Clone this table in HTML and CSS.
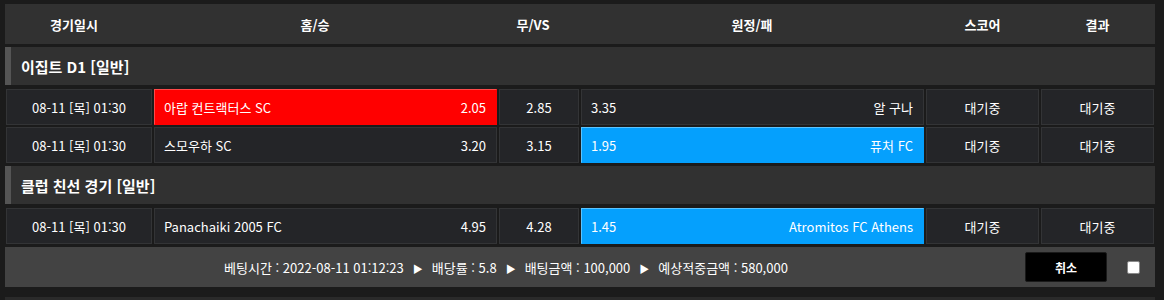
FILE: index.html
```html
<!DOCTYPE html>
<html lang="ko">
<head>
<meta charset="utf-8">
<link rel="stylesheet" href="styles.css">
</head>
<body>
<div class="wrap">
  <div class="thead">
    <div class="th c-date">경기일시</div>
    <div class="th c-home">홈/승</div>
    <div class="th c-draw">무/VS</div>
    <div class="th c-away">원정/패</div>
    <div class="th c-score">스코어</div>
    <div class="th c-result">결과</div>
  </div>

  <div class="league">이집트 D1 [일반]</div>
  <div class="rows">
    <div class="row">
      <div class="cell date">08-11 [목] 01:30</div>
      <div class="cell team home sel-red"><span>아랍 컨트랙터스 SC</span><span>2.05</span></div>
      <div class="cell draw">2.85</div>
      <div class="cell team away"><span>3.35</span><span>알 구나</span></div>
      <div class="cell score">대기중</div>
      <div class="cell result">대기중</div>
    </div>
    <div class="row">
      <div class="cell date">08-11 [목] 01:30</div>
      <div class="cell team home"><span>스모우하 SC</span><span>3.20</span></div>
      <div class="cell draw">3.15</div>
      <div class="cell team away sel-blue"><span>1.95</span><span>퓨처 FC</span></div>
      <div class="cell score">대기중</div>
      <div class="cell result">대기중</div>
    </div>
  </div>

  <div class="league">클럽 친선 경기 [일반]</div>
  <div class="rows">
    <div class="row">
      <div class="cell date">08-11 [목] 01:30</div>
      <div class="cell team home"><span>Panachaiki 2005 FC</span><span>4.95</span></div>
      <div class="cell draw">4.28</div>
      <div class="cell team away sel-blue"><span>1.45</span><span>Atromitos FC Athens</span></div>
      <div class="cell score">대기중</div>
      <div class="cell result">대기중</div>
    </div>
  </div>

  <div class="footer">
    <div class="summary">
      <span>베팅시간 : 2022-08-11 01:12:23</span><span class="tri">▶</span><span>배당률 : 5.8</span><span class="tri">▶</span><span>배팅금액 : 100,000</span><span class="tri">▶</span><span>예상적중금액 : 580,000</span>
    </div>
    <button class="cancel">취소</button>
    <span class="check"></span>
  </div>
  <div class="next"></div>
</div>
</body>
</html>
```

FILE: styles.css
```css
* { box-sizing: border-box; }
html, body { margin: 0; padding: 0; }
body {
  background: #1b1b1b;
  color: #ffffff;
  font-family: "Malgun Gothic", "Noto Sans CJK KR", "Noto Sans", sans-serif;
  font-size: 13px;
  width: 1164px;
  height: 300px;
  overflow: hidden;
}
.wrap {
  width: 1150px;
  margin-left: 5px;
  padding-top: 4px;
}
.thead {
  height: 40px;
  background: #313131;
  display: flex;
  align-items: center;
  font-weight: bold;
  font-size: 13px;
}
.th { text-align: center; }
.th.c-date { width: 138px; }
.th.c-home { width: 344px; }
.th.c-draw { width: 92px; }
.th.c-away { width: 346px; }
.th.c-score { width: 115px; }
.th.c-result { width: 115px; }

.league {
  height: 38px;
  margin-top: 3px;
  background: #313131;
  border-left: 6px solid #555555;
  padding-left: 10px;
  display: flex;
  align-items: center;
  font-weight: bold;
  font-size: 15px;
}
.rows {
  margin-top: 4px;
  padding-left: 1px;
  display: flex;
  flex-direction: column;
  gap: 2px;
}
.row {
  display: flex;
  gap: 2px;
  height: 36px;
}
.cell {
  background: #242528;
  border: 1px solid #333436;
  display: flex;
  align-items: center;
  justify-content: center;
}
.date { width: 146px; }
.home, .away { width: 343px; }
.draw { width: 80px; }
.score, .result { width: 113px; }
.team {
  justify-content: space-between;
  padding: 0 10px 0 9px;
}
.sel-red {
  background: #ff0000;
  border-color: #ff4a4a;
  border-bottom-color: #ff0000;
  border-right-color: #ff0000;
}
.sel-blue {
  background: #05a0fd;
  border-color: #5cc4ff;
  border-bottom-color: #05a0fd;
  border-right-color: #05a0fd;
}
.footer {
  margin-top: 3px;
  height: 40px;
  background: #434343;
  display: flex;
  align-items: center;
  padding-right: 15px;
}
.summary {
  width: 1002px;
  text-align: center;
  white-space: nowrap;
}
.tri {
  font-size: 10px;
  margin: 0 9px;
}
.cancel {
  margin-left: 18px;
  width: 82px;
  height: 30px;
  background: #000000;
  color: #ffffff;
  border: 1px solid #1a1a1a;
  border-radius: 2px;
  font-family: inherit;
  font-size: 12px;
  font-weight: bold;
  padding: 0;
}
.check {
  margin-left: 20px;
  width: 13px;
  height: 13px;
  background: #ffffff;
  border: 1px solid #8a8a8a;
  border-radius: 2px;
}
.next {
  margin-top: 10px;
  height: 4px;
  background: #2a2a2a;
}
```
